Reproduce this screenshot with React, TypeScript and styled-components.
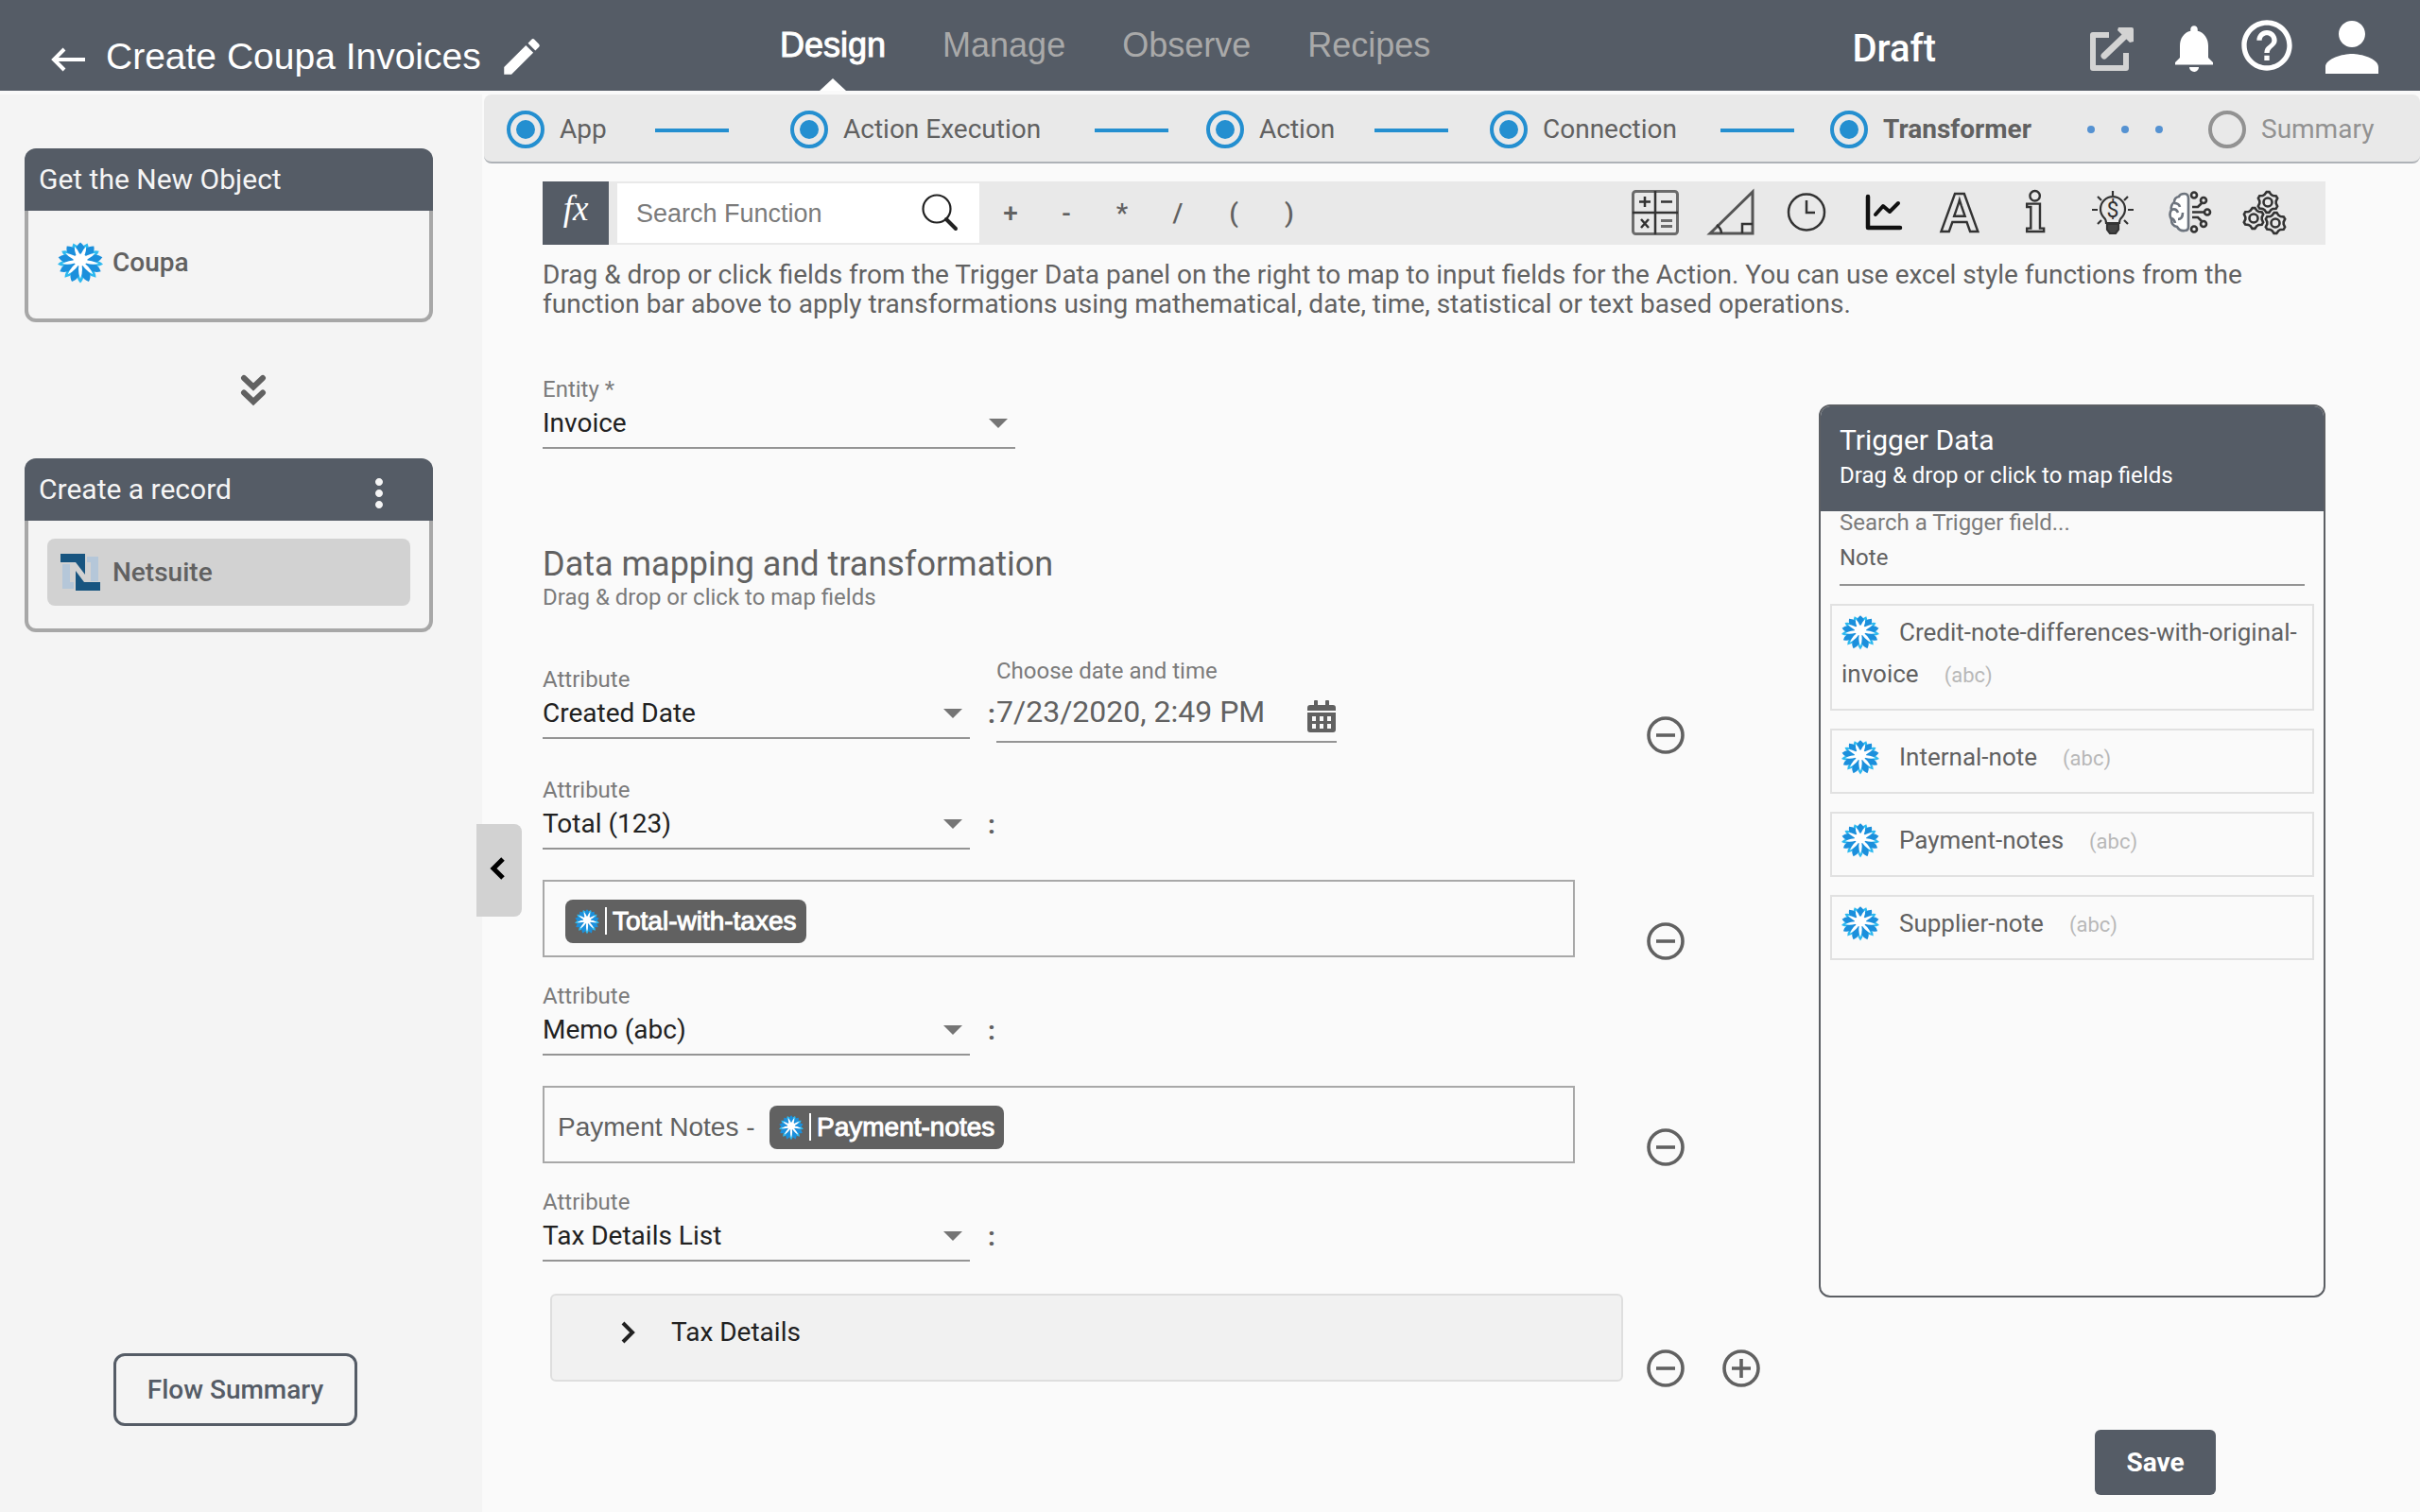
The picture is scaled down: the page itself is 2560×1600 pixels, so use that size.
import React, { useState } from "react";
import styled, { createGlobalStyle } from "styled-components";
import { MdNotifications, MdHelpOutline, MdPerson, MdMoreVert, MdEdit } from "react-icons/md";

const color = {
  slate: "#555c66",
  page: "#fafafa",
  side: "#f4f4f4",
  bar: "#e9e9e9",
  blue: "#248fd0",
  text: "#616161",
  muted: "#7b7b7b",
  ink: "#212121",
  line: "#949494",
};

const roboto = `Roboto, "Noto Sans", sans-serif`;
const helvetica = `"Liberation Sans", Arial, sans-serif`;

const GlobalStyle = createGlobalStyle`
  *, *::before, *::after { box-sizing: border-box; }
  body { margin: 0; background: ${color.page}; color: ${color.text}; font: 28px/36px ${roboto}; }
  button, input, select { font: inherit; color: inherit; margin: 0; padding: 0; border: 0; background: none; border-radius: 0; outline: 0; }
  button { cursor: pointer; }
  h1, h2, p, ul, ol { margin: 0; padding: 0; font-weight: 400; }
  ul, ol { list-style: none; }
  a { color: inherit; text-decoration: none; }
  svg { display: block; flex: none; overflow: visible; }
`;

/* ---------- page frame ---------- */

const Page = styled.div`
  min-height: 100vh;
  display: flex;
  flex-direction: column;
`;

const Header = styled.header`
  height: 96px;
  margin-bottom: 4px;
  display: flex;
  background: ${color.slate};
  color: #fff;
`;

const TitleGroup = styled.div`
  width: 825px;
  flex: none;
  display: flex;
  align-items: center;
  padding: 24px 0 0 54px;
`;

const Title = styled.h1`
  font: 39px/48px ${helvetica};
  margin: 0 18px 0 22px;
`;

const Nav = styled.nav`
  display: flex;
  gap: 60px;
`;

const NavLink = styled.a<{ $active?: boolean }>`
  position: relative;
  font: 36px/96px ${helvetica};
  color: ${(p) => (p.$active ? "#fff" : "#a9a9a9")};
  -webkit-text-stroke: ${(p) => (p.$active ? "1px #fff" : "0")};
  &::after {
    content: "";
    display: ${(p) => (p.$active ? "block" : "none")};
    position: absolute;
    left: 50%;
    bottom: 0;
    margin-left: -14px;
    border: 14px solid transparent;
    border-top: 0;
    border-bottom: 13px solid #fff;
  }
`;

const HeaderTools = styled.div`
  margin-left: auto;
  display: flex;
  align-items: center;
`;

const Status = styled.span`
  font: 500 40px/48px ${roboto};
  margin: 8px 158px 0 0;
`;

const IconButton = styled.button<{ $w: number; $h: number; $drop?: number }>`
  width: ${(p) => p.$w}px;
  height: ${(p) => p.$h}px;
  padding-top: ${(p) => p.$drop ?? 0}px;
  display: flex;
  align-items: center;
  justify-content: center;
`;

const Columns = styled.div`
  flex: 1;
  display: flex;
`;

/* ---------- sidebar ---------- */

const Sidebar = styled.aside`
  width: 510px;
  flex: none;
  display: flex;
  flex-direction: column;
  padding: 57px 52px 91px 26px;
  background: ${color.side};
`;

const CardHead = styled.div`
  height: 66px;
  display: flex;
  align-items: center;
  justify-content: space-between;
  padding: 0 33px 0 15px;
  border-radius: 12px 12px 0 0;
  background: ${color.slate};
  color: #f5f5f5;
  font-size: 30px;
`;

const CardBody = styled.div`
  padding: 19px 20px 24px;
  border: 4px solid #a7a7a7;
  border-top: 0;
  border-radius: 0 0 12px 12px;
`;

const AppButton = styled.button<{ $selected?: boolean }>`
  width: 100%;
  height: 71px;
  display: flex;
  align-items: center;
  gap: 10px;
  padding-left: 11px;
  border-radius: 8px;
  font-weight: 500;
  background: ${(p) => (p.$selected ? "#d2d2d2" : "transparent")};
`;

const FlowArrow = styled.div`
  height: 144px;
  display: flex;
  align-items: center;
  justify-content: center;
  padding-left: 52px;
`;

const SummaryButton = styled.button`
  align-self: center;
  width: 258px;
  height: 77px;
  margin: auto 0 0 14px;
  border: 3px solid ${color.slate};
  border-radius: 12px;
  color: ${color.slate};
  font-weight: 500;
`;

/* ---------- workspace ---------- */

const Workspace = styled.main`
  position: relative;
  flex: 1;
  min-width: 0;
  padding-left: 2px;
`;

const CollapseButton = styled.button`
  position: absolute;
  left: -6px;
  top: 772px;
  width: 48px;
  height: 98px;
  display: flex;
  align-items: center;
  justify-content: center;
  padding: 0 4px 5px 0;
  border-radius: 0 8px 8px 0;
  background: #d2d2d2;
`;

const Stepper = styled.ol`
  height: 73px;
  display: grid;
  grid-template-columns: 300fr 440fr 300fr 360fr 400fr 224fr;
  align-items: center;
  padding-left: 24px;
  background: ${color.bar};
  border-bottom: 2px solid #aeb2b7;
  border-radius: 8px;
`;

const Step = styled.li<{ $state: "done" | "current" | "todo" }>`
  display: flex;
  align-items: center;
  padding-top: 2px;
  color: ${(p) => (p.$state === "todo" ? "#929292" : color.text)};
  font-weight: ${(p) => (p.$state === "current" ? 700 : 400)};
`;

const StepMark = styled.span<{ $todo?: boolean }>`
  width: 40px;
  height: 40px;
  margin-right: 16px;
  display: grid;
  place-items: center;
  border: 4px solid ${(p) => (p.$todo ? "#929292" : color.blue)};
  border-radius: 50%;
  &::after {
    content: "";
    width: 20px;
    height: 20px;
    border-radius: 50%;
    background: ${(p) => (p.$todo ? "transparent" : color.blue)};
  }
`;

const StepLine = styled.span<{ $lead: number }>`
  width: 78px;
  height: 4px;
  margin: 2px 0 0 ${(p) => p.$lead}px;
  background: ${color.blue};
`;

const StepDots = styled.span<{ $lead: number }>`
  display: flex;
  gap: 28px;
  margin-left: ${(p) => p.$lead}px;
  i {
    width: 8px;
    height: 8px;
    border-radius: 50%;
    background: #5592d2;
  }
`;

const Content = styled.div`
  padding: 19px 100px 0 62px;
`;

const Toolbar = styled.div`
  height: 67px;
  display: flex;
  align-items: center;
  padding-right: 36px;
  background: ${color.bar};
`;

const FxButton = styled.button`
  width: 70px;
  height: 67px;
  padding-bottom: 10px;
  background: ${color.slate};
  color: #fff;
  font: italic 37px/56px "Liberation Serif", serif;
`;

const SearchBox = styled.label`
  width: 383px;
  height: 63px;
  margin: 0 8px 0 9px;
  display: flex;
  align-items: center;
  justify-content: space-between;
  padding: 0 22px 0 20px;
  background: #fff;
  input {
    width: 260px;
    font: 27px/36px ${helvetica};
    color: ${color.muted};
  }
  input::placeholder { color: ${color.muted}; opacity: 1; }
`;

const Operators = styled.div`
  display: flex;
  flex: 1;
  font-weight: 500;
`;

const Operator = styled.button`
  width: 50px;
  margin-right: 9px;
`;

const Categories = styled.div`
  display: flex;
  gap: 31px;
`;

const Intro = styled.p`
  margin-top: 16px;
  line-height: 31px;
`;

const Board = styled.div`
  display: grid;
  grid-template-columns: minmax(0, 1fr) 536px;
  align-items: start;
  margin-top: 61px;
`;

const SectionTitle = styled.h2`
  margin-top: 101px;
  font-size: 36px;
  line-height: 42px;
`;

const SectionHint = styled.p`
  margin-bottom: 50px;
  font-size: 24px;
  line-height: 28px;
  color: ${color.muted};
`;

const Mappings = styled.div`
  display: flex;
  flex-direction: column;
  gap: 24px;
`;

const Mapping = styled.div`
  display: flex;
  align-items: flex-end;
`;

const MappingBody = styled.div`
  flex: 1;
  min-width: 0;
  padding-bottom: 3px;
`;

const Actions = styled.div`
  width: 207px;
  display: flex;
  gap: 40px;
  padding-left: 25px;
`;

const FieldRow = styled.div<{ $dated?: boolean }>`
  display: flex;
  align-items: flex-end;
  padding-bottom: ${(p) => (p.$dated ? 13 : 0)}px;
`;

const Field = styled.div<{ $wide?: boolean }>`
  width: ${(p) => (p.$wide ? 500 : 452)}px;
  display: flex;
  flex-direction: column;
  label {
    font-size: 24px;
    line-height: 28px;
    color: ${color.muted};
  }
`;

const SelectShell = styled.div`
  display: grid;
  align-items: center;
  padding-bottom: 3px;
  border-bottom: 2px solid ${color.line};
  select, svg { grid-area: 1 / 1; }
  select {
    appearance: none;
    height: 44px;
    color: ${color.ink};
  }
  svg {
    justify-self: end;
    margin-right: 8px;
    pointer-events: none;
  }
`;

const Colon = styled.span`
  width: 28px;
  padding: 0 1px 8px 0;
  text-align: right;
  font-weight: 700;
`;

const DateField = styled.div`
  width: 360px;
  margin-bottom: -4px;
  display: flex;
  flex-direction: column;
  label {
    font-size: 24px;
    line-height: 28px;
    color: ${color.muted};
  }
`;

const DateShell = styled.div`
  height: 62px;
  display: flex;
  align-items: center;
  padding: 0 1px 2px 0;
  border-bottom: 2px solid ${color.line};
  input {
    flex: 1;
    min-width: 0;
    font-size: 32px;
  }
`;

const Expression = styled.div<{ $chipFirst?: boolean }>`
  height: 82px;
  margin: 32px 51px 0 0;
  padding: 5px 14px 0 ${(p) => (p.$chipFirst ? 22 : 14)}px;
  display: flex;
  align-items: center;
  border: 2px solid #a8a8a8;
  font: 28px/36px ${helvetica};
`;

const ExpressionText = styled.input`
  width: 224px;
`;

const Chip = styled.span`
  height: 46px;
  flex: none;
  display: flex;
  align-items: center;
  padding: 0 10px;
  border-radius: 8px;
  background: #616161;
  color: #fff;
  b {
    padding-left: 6px;
    margin-left: 6px;
    border-left: 2px solid #fff;
    line-height: 29px;
    font-weight: 400;
    -webkit-text-stroke: 1px #fff;
  }
`;

const Accordion = styled.button`
  width: calc(100% - 8px);
  height: 93px;
  margin: 34px 0 3px 8px;
  display: flex;
  align-items: center;
  gap: 37px;
  padding: 0 0 12px 73px;
  border: 2px solid #dedede;
  border-radius: 6px;
  background: #f1f1f1;
  color: ${color.ink};
`;

const SaveRow = styled.div`
  display: flex;
  justify-content: flex-end;
  padding: 45px 116px 17px 0;
`;

const SaveButton = styled.button`
  width: 128px;
  height: 69px;
  border-radius: 6px;
  background: ${color.slate};
  color: #fff;
  font-weight: 700;
`;

/* ---------- trigger data panel ---------- */

const TriggerPanel = styled.section`
  min-height: 945px;
  margin-top: 30px;
  overflow: hidden;
  border: 2px solid #5c5f64;
  border-radius: 12px;
`;

const TriggerHead = styled.header`
  height: 111px;
  padding: 17px 20px 0;
  background: ${color.slate};
  color: #fff;
  h2 { font-size: 30px; line-height: 38px; }
  p { font-size: 24px; line-height: 36px; }
`;

const TriggerSearch = styled.div`
  margin: 0 20px;
  display: flex;
  flex-direction: column;
  font-size: 24px;
  label { line-height: 24px; color: ${color.muted}; }
  input { height: 55px; padding-bottom: 4px; border-bottom: 2px solid ${color.line}; }
`;

const TriggerList = styled.ul`
  display: flex;
  flex-direction: column;
  gap: 19px;
  margin: 19px 10px 0;
`;

const TriggerItem = styled.button`
  display: block;
  width: 100%;
  padding: 6px 6px 15px 10px;
  border: 2px solid #e1e1e1;
  text-align: left;
  font-size: 26px;
  line-height: 44px;
  svg { display: inline-block; vertical-align: top; margin: 4px 21px 0 0; }
  small { margin-left: 27px; font-size: 22px; line-height: 24px; color: #b8b8b8; }
`;

/* ---------- drawings ---------- */

function petal(angle: number, from: number, reach: number, half: number) {
  const a = (angle * Math.PI) / 180;
  const ux = Math.sin(a);
  const uy = -Math.cos(a);
  const at = (r: number, s: number) =>
    `${(24 + ux * r - uy * s).toFixed(1)} ${(20 + (uy * r + ux * s) * 0.9).toFixed(1)}`;
  const mid = from + (reach - from) * 0.6;
  return `M${at(from, 0)}Q${at(mid, half)} ${at(reach, 0)}Q${at(mid, -half)} ${at(from, 0)}Z`;
}

const CoupaLogo = ({ width = 48, height = 43 }: { width?: number; height?: number }) => {
  const angles = Array.from({ length: 18 }, (_, i) => i * 20);
  const reach = (d: number) => 23 - 2.2 * Math.cos((d * Math.PI) / 180);
  return (
    <svg width={width} height={height} viewBox="0 0 48 43" preserveAspectRatio="none" aria-hidden="true">
      {angles.map((d, i) => (i % 2 ? <path key={d} d={petal(d, 5, reach(d) + 1, 7)} fill="#2cb9f0" /> : null))}
      {angles.map((d, i) => (i % 2 ? null : <path key={d} d={petal(d, 4, reach(d) + 1, 9)} fill="#1b8fdc" />))}
      {angles.map((d, i) => (i % 2 ? <path key={d} d={petal(d, -3, reach(d) * 0.84, 4)} fill="#fff" /> : null))}
      <ellipse cx="24" cy="19" rx="7.500" ry="6.500" fill="#fff" />
    </svg>
  );
};

const NetsuiteLogo = () => (
  <svg width="48" height="43" viewBox="61 584 48 43" aria-hidden="true">
    <path d="M66 597h8v19h4v7H66zM92 589h12v26h-8v-20h-4z" fill="#b5c7d9" />
    <path d="M64 586h26v22l-10-13H64zM80 604l9 12h17v9H80z" fill="#185580" />
  </svg>
);

const BackArrow = () => (
  <svg width="36" height="26" viewBox="0 0 36 26" fill="none" stroke="#fff" strokeWidth="4">
    <path d="M36 13H4M14 2 3 13l11 11" />
  </svg>
);

const OpenIcon = () => (
  <svg width="48" height="48" viewBox="0 0 48 48" fill="none" stroke="#d3d3d3" strokeWidth="6" strokeLinejoin="round">
    <path d="M21 10H4v35h35V29" strokeLinecap="butt" />
    <path d="M16 32 38 11" strokeWidth="7" strokeLinecap="round" />
    <path d="M31 2h14q2 0 2 2v13l-4 1L30 5z" fill="#d3d3d3" stroke="none" />
  </svg>
);

const SearchIcon = () => (
  <svg width="40" height="40" viewBox="0 0 40 40" fill="none" stroke="#222" strokeLinecap="round">
    <circle cx="17" cy="15" r="14.500" strokeWidth="2.200" />
    <path d="m27 26 10 10" strokeWidth="4" />
  </svg>
);

const Caret = () => (
  <svg width="20" height="10" viewBox="0 0 20 10" aria-hidden="true">
    <path d="M0 0h20L10 10z" fill="#757575" />
  </svg>
);

const Calendar = () => (
  <svg width="30" height="34" viewBox="0 0 30 34" fill={color.text} aria-hidden="true">
    <path d="M7 1q0-1 1-1h2q1 0 1 1v4h8V1q0-1 1-1h2q1 0 1 1v4h4q3 0 3 3v3H0V8q0-3 3-3h4z" />
    <path
      fillRule="evenodd"
      d="M0 13h30v18q0 3-3 3H3q-3 0-3-3zM5 17v5h4v-5zM13 17v5h4v-5zM21 17v5h4v-5zM5 25v5h4v-5zM13 25v5h4v-5zM21 25v5h4v-5z"
    />
  </svg>
);

const RoundSign = ({ plus }: { plus?: boolean }) => (
  <svg width="40" height="40" viewBox="0 0 40 40" fill="none" stroke={color.text} strokeWidth="3.600">
    <circle cx="20" cy="20" r="18" />
    <path d={plus ? "M10 20h20M20 10v20" : "M10 20h20"} />
  </svg>
);

const DoubleChevron = () => (
  <svg width="28" height="33" viewBox="0 0 28 33" fill="none" stroke={color.text} strokeWidth="6" strokeLinecap="round">
    <path d="m4 3 10 9.500L24 3M4 18.500 14 28l10-9.500" />
  </svg>
);

const Chevron = ({ left }: { left?: boolean }) => (
  <svg width="16" height="24" viewBox="0 0 16 24" fill="none" stroke={left ? "#000" : color.ink} strokeWidth={left ? 5 : 4}>
    <path d={left ? "M14 2 4 12l10 10" : "m2 2 10 10L2 22"} />
  </svg>
);

function gear(cx: number, cy: number) {
  const pts: string[] = [];
  for (let i = 0; i < 24; i++) {
    const a = ((i * 15 - 7) * Math.PI) / 180;
    const r = i % 4 < 2 ? 11 : 8.8;
    pts.push(`${(cx + r * Math.sin(a)).toFixed(1)} ${(cy - r * Math.cos(a)).toFixed(1)}`);
  }
  return `M${pts.join("L")}Z`;
}

const glyphs: { name: string; drawing: React.ReactNode }[] = [
  {
    name: "Math",
    drawing: (
      <g>
        <rect x="1.500" y="1.500" width="47" height="45" rx="3" stroke="#6b6b6b" strokeWidth="3" />
        <path d="M25 1v46M1 24h48" strokeWidth="2.500" />
        <path d="M8 12.500h12M14 7v11M31 12.500h12M10 31l8 9M18 31l-8 9" strokeWidth="2.500" />
        <path d="M31 32.500h12M31 38.500h12" stroke="#6b6b6b" strokeWidth="3" />
      </g>
    ),
  },
  {
    name: "Trigonometry",
    drawing: (
      <g>
        <path d="M2 46 47 2v44z" stroke="#555" strokeWidth="3" />
        <path d="M36 46V36h11M9 37q5 4 5 9" strokeWidth="2.500" />
      </g>
    ),
  },
  {
    name: "Date and time",
    drawing: (
      <g>
        <circle cx="23" cy="23.500" r="19" strokeWidth="2.500" />
        <path d="M23 11v13h9" strokeWidth="2.500" />
      </g>
    ),
  },
  {
    name: "Statistics",
    drawing: (
      <g stroke="#111" strokeLinecap="round" strokeLinejoin="round">
        <path d="M7 7v33h34" strokeWidth="4.500" />
        <path d="m15 26 8-9 7 6 9-9" strokeWidth="4" />
      </g>
    ),
  },
  {
    name: "Text",
    drawing: (
      <text x="23" y="44" textAnchor="middle" fontFamily="Liberation Sans, sans-serif" fontWeight="700" fontSize="58" strokeWidth="2.400">
        A
      </text>
    ),
  },
  {
    name: "Information",
    drawing: (
      <text x="22" y="44" textAnchor="middle" fontFamily="DejaVu Serif, serif" fontWeight="700" fontSize="56" strokeWidth="2.400">
        i
      </text>
    ),
  },
  {
    name: "Finance",
    drawing: (
      <g strokeWidth="2.200">
        <path d="M16 35q0-4-3-6.500a13 13 0 1 1 20 0q-3 2.500-3 6.500z" />
        <path d="M17 36h12v6l-3 4h-6l-3-4z" fill="#444" />
        <path d="M23 1v5M7 7l4 4M39 7l-4 4M1 21h6M39 21h6M7 36l4-4M39 36l-4-4" />
        <text x="23" y="29" textAnchor="middle" fontFamily="Roboto, sans-serif" fontSize="23" strokeWidth="0" fill="#333">
          $
        </text>
      </g>
    ),
  },
  {
    name: "Artificial intelligence",
    drawing: (
      <g strokeWidth="2.600">
        <path
          d="M22 9q0-5-4-5-5 0-6 3-5 1-5 6-4 3-3 8-3 5 0 10 0 7 6 8 3 5 8 4 4 0 4-4z"
          fill="#fff"
          stroke="#6d747e"
        />
        <path d="M7 14q5 0 6 4M4 21q5-2 7 3M11 31q5 0 5-7M8 35q-1-4-4-5" stroke="#6d747e" />
        <circle cx="28" cy="5.500" r="3" />
        <circle cx="38" cy="11" r="3" />
        <circle cx="42" cy="23.500" r="3" />
        <circle cx="38" cy="36" r="3" />
        <circle cx="28" cy="41.500" r="3" />
        <path d="M26 18h6l4-4M26 23.500h13M26 29h6l4 4" />
      </g>
    ),
  },
  {
    name: "Utilities",
    drawing: (
      <g strokeWidth="2.600">
        <path d={gear(25, 13)} />
        <circle cx="25" cy="13" r="4.500" />
        <path d={gear(10, 30)} />
        <circle cx="10" cy="30" r="4.500" />
        <path d={gear(33, 35)} />
        <circle cx="33" cy="35" r="4.500" />
      </g>
    ),
  },
];

/* ---------- pieces ---------- */

type SelectProps = { id: string; label: string; options: string[]; wide?: boolean };

const SelectField = ({ id, label, options, wide }: SelectProps) => (
  <Field $wide={wide}>
    <label htmlFor={id}>{label}</label>
    <SelectShell>
      <select id={id}>
        {options.map((o) => (
          <option key={o}>{o}</option>
        ))}
      </select>
      <Caret />
    </SelectShell>
  </Field>
);

const RowActions = ({ addable }: { addable?: boolean }) => (
  <Actions>
    <IconButton $w={40} $h={40} aria-label="Remove mapping">
      <RoundSign />
    </IconButton>
    {addable && (
      <IconButton $w={40} $h={40} aria-label="Add mapping">
        <RoundSign plus />
      </IconButton>
    )}
  </Actions>
);

const FieldChip = ({ name }: { name: string }) => (
  <Chip>
    <CoupaLogo width={26} height={26} />
    <b>{name}</b>
  </Chip>
);

const steps = [
  { label: "App", lead: 51 },
  { label: "Action Execution", lead: 57 },
  { label: "Action", lead: 42 },
  { label: "Connection", lead: 46 },
];

const triggerFields = ["Credit-note-differences-with-original-invoice", "Internal-note", "Payment-notes", "Supplier-note"];

export default function App() {
  const [query, setQuery] = useState("Note");
  const [date, setDate] = useState("7/23/2020, 2:49 PM");
  const [memo, setMemo] = useState("Payment Notes -");

  return (
    <Page>
      <GlobalStyle />
      <Header>
        <TitleGroup>
          <IconButton $w={36} $h={36} $drop={6} aria-label="Back">
            <BackArrow />
          </IconButton>
          <Title>Create Coupa Invoices</Title>
          <IconButton $w={50} $h={50} aria-label="Rename">
            <MdEdit size={50} />
          </IconButton>
        </TitleGroup>
        <Nav>
          <NavLink href="#design" $active>Design</NavLink>
          <NavLink href="#manage">Manage</NavLink>
          <NavLink href="#observe">Observe</NavLink>
          <NavLink href="#recipes">Recipes</NavLink>
        </Nav>
        <HeaderTools>
          <Status>Draft</Status>
          <IconButton $w={56} $h={88} $drop={6} aria-label="Open">
            <OpenIcon />
          </IconButton>
          <IconButton $w={118} $h={88} $drop={6} aria-label="Notifications">
            <MdNotifications size={60} />
          </IconButton>
          <IconButton $w={36} $h={96} aria-label="Help">
            <MdHelpOutline size={64} />
          </IconButton>
          <IconButton $w={144} $h={88} $drop={4} aria-label="Account">
            <MdPerson size={84} />
          </IconButton>
        </HeaderTools>
      </Header>

      <Columns>
        <Sidebar>
          <section>
            <CardHead>Get the New Object</CardHead>
            <CardBody>
              <AppButton>
                <CoupaLogo />
                Coupa
              </AppButton>
            </CardBody>
          </section>
          <FlowArrow>
            <DoubleChevron />
          </FlowArrow>
          <section>
            <CardHead>
              Create a record
              <IconButton $w={48} $h={60} $drop={8} aria-label="More">
                <MdMoreVert size={48} />
              </IconButton>
            </CardHead>
            <CardBody>
              <AppButton $selected>
                <NetsuiteLogo />
                Netsuite
              </AppButton>
            </CardBody>
          </section>
          <SummaryButton>Flow Summary</SummaryButton>
        </Sidebar>

        <Workspace>
          <Stepper>
            {steps.map((s) => (
              <Step key={s.label} $state="done">
                <StepMark />
                {s.label}
                <StepLine $lead={s.lead} />
              </Step>
            ))}
            <Step $state="current">
              <StepMark />
              Transformer
              <StepDots $lead={59}>
                <i />
                <i />
                <i />
              </StepDots>
            </Step>
            <Step $state="todo">
              <StepMark $todo />
              Summary
            </Step>
          </Stepper>

          <Content>
            <Toolbar>
              <FxButton>fx</FxButton>
              <SearchBox>
                <input type="text" placeholder="Search Function" aria-label="Search Function" />
                <SearchIcon />
              </SearchBox>
              <Operators>
                {["+", "-", "*", "/", "(", ")"].map((o) => (
                  <Operator key={o}>{o}</Operator>
                ))}
              </Operators>
              <Categories>
                {glyphs.map((g) => (
                  <IconButton key={g.name} $w={50} $h={50} aria-label={g.name}>
                    <svg width="50" height="50" viewBox="0 0 50 50" fill="none" stroke="#333">
                      {g.drawing}
                    </svg>
                  </IconButton>
                ))}
              </Categories>
            </Toolbar>

            <Intro>
              Drag &amp; drop or click fields from the Trigger Data panel on the right to map to input fields for the
              Action. You can use excel style functions from the function bar above to apply transformations using
              mathematical, date, time, statistical or text based operations.
            </Intro>

            <Board>
              <div>
                <SelectField id="entity" label="Entity *" options={["Invoice"]} wide />
                <SectionTitle>Data mapping and transformation</SectionTitle>
                <SectionHint>Drag &amp; drop or click to map fields</SectionHint>

                <Mappings>
                  <Mapping>
                    <MappingBody>
                      <FieldRow $dated>
                        <SelectField id="attr-1" label="Attribute" options={["Created Date"]} />
                        <Colon>:</Colon>
                        <DateField>
                          <label htmlFor="when">Choose date and time</label>
                          <DateShell>
                            <input id="when" type="text" value={date} onChange={(e) => setDate(e.target.value)} />
                            <IconButton $w={30} $h={44} $drop={10} aria-label="Open calendar">
                              <Calendar />
                            </IconButton>
                          </DateShell>
                        </DateField>
                      </FieldRow>
                    </MappingBody>
                    <RowActions />
                  </Mapping>

                  <Mapping>
                    <MappingBody>
                      <FieldRow>
                        <SelectField id="attr-2" label="Attribute" options={["Total (123)"]} />
                        <Colon>:</Colon>
                      </FieldRow>
                      <Expression $chipFirst>
                        <FieldChip name="Total-with-taxes" />
                      </Expression>
                    </MappingBody>
                    <RowActions />
                  </Mapping>

                  <Mapping>
                    <MappingBody>
                      <FieldRow>
                        <SelectField id="attr-3" label="Attribute" options={["Memo (abc)"]} />
                        <Colon>:</Colon>
                      </FieldRow>
                      <Expression>
                        <ExpressionText
                          type="text"
                          aria-label="Memo text"
                          value={memo}
                          onChange={(e) => setMemo(e.target.value)}
                        />
                        <FieldChip name="Payment-notes" />
                      </Expression>
                    </MappingBody>
                    <RowActions />
                  </Mapping>

                  <Mapping>
                    <MappingBody>
                      <FieldRow>
                        <SelectField id="attr-4" label="Attribute" options={["Tax Details List"]} />
                        <Colon>:</Colon>
                      </FieldRow>
                      <Accordion aria-expanded="false">
                        <Chevron />
                        Tax Details
                      </Accordion>
                    </MappingBody>
                    <RowActions addable />
                  </Mapping>
                </Mappings>
              </div>

              <TriggerPanel>
                <TriggerHead>
                  <h2>Trigger Data</h2>
                  <p>Drag &amp; drop or click to map fields</p>
                </TriggerHead>
                <TriggerSearch>
                  <label htmlFor="trigger">Search a Trigger field...</label>
                  <input id="trigger" type="text" value={query} onChange={(e) => setQuery(e.target.value)} />
                </TriggerSearch>
                <TriggerList>
                  {triggerFields.map((f) => (
                    <li key={f}>
                      <TriggerItem>
                        <CoupaLogo width={40} height={36} />
                        {f}
                        <small>(abc)</small>
                      </TriggerItem>
                    </li>
                  ))}
                </TriggerList>
              </TriggerPanel>
            </Board>

            <SaveRow>
              <SaveButton>Save</SaveButton>
            </SaveRow>
          </Content>

          <CollapseButton aria-label="Collapse sidebar">
            <Chevron left />
          </CollapseButton>
        </Workspace>
      </Columns>
    </Page>
  );
}
